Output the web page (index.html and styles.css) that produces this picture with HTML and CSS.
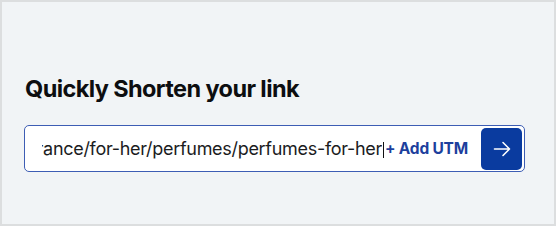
FILE: index.html
```html
<!DOCTYPE html>
<html>
<head>
<meta charset="utf-8">
<link rel="stylesheet" href="styles.css">
</head>
<body>
<div class="frame">
  <h1 class="title">Quickly Shorten your link</h1>
  <div class="field">
    <div class="value"><span class="text">https://www.example.com/en/fragrance/for-her/perfumes/perfumes-for-her</span></div>
    <span class="caret"></span>
    <span class="utm">+ Add UTM</span>
    <button class="go" aria-label="Shorten">
      <svg width="18" height="18" viewBox="0 0 18 18" fill="none" stroke="#fff" stroke-width="1.6" stroke-linecap="round" stroke-linejoin="round"><path d="M1.5 9h15M10 2.5l6.5 6.5-6.5 6.5"/></svg>
    </button>
  </div>
</div>
</body>
</html>
```

FILE: styles.css
```css
* { box-sizing: border-box; }
html, body { margin: 0; padding: 0; }
body { width: 556px; height: 226px; font-family: Inter, "Noto Sans", sans-serif; }
.frame {
  width: 556px;
  height: 226px;
  border: 2px solid #dcdedf;
  background: #f1f4f6;
  padding: 71px 29px 0 22px;
}
.title {
  margin: 0 0 21px 1px;
  font-size: 23.5px;
  line-height: 31px;
  font-weight: 700;
  color: #0d0e10;
  letter-spacing: -0.6px;
}
.field {
  display: flex;
  align-items: center;
  height: 47px;
  background: #fff;
  border: 1px solid #3d5db4;
  border-radius: 5px;
  padding: 0 2px 0 17px;
}
.value {
  flex: 0 0 340px;
  overflow: hidden;
  display: flex;
  justify-content: flex-end;
  white-space: nowrap;
}
.text {
  font-size: 18px;
  color: #1b1c1e;
  letter-spacing: -0.3px;
}
.caret {
  width: 1px;
  height: 16px;
  background: #111;
  margin: 2px 1px 0 1px;
}
.utm {
  font-size: 15.5px;
  font-weight: 700;
  color: #1d3f9d;
  white-space: nowrap;
  letter-spacing: -0.2px;
  flex: 1;
}
.go {
  width: 41px;
  height: 42px;
  border: 0;
  border-radius: 5px;
  background: #0a3b9f;
  display: flex;
  align-items: center;
  justify-content: center;
  padding: 0;
}
```
